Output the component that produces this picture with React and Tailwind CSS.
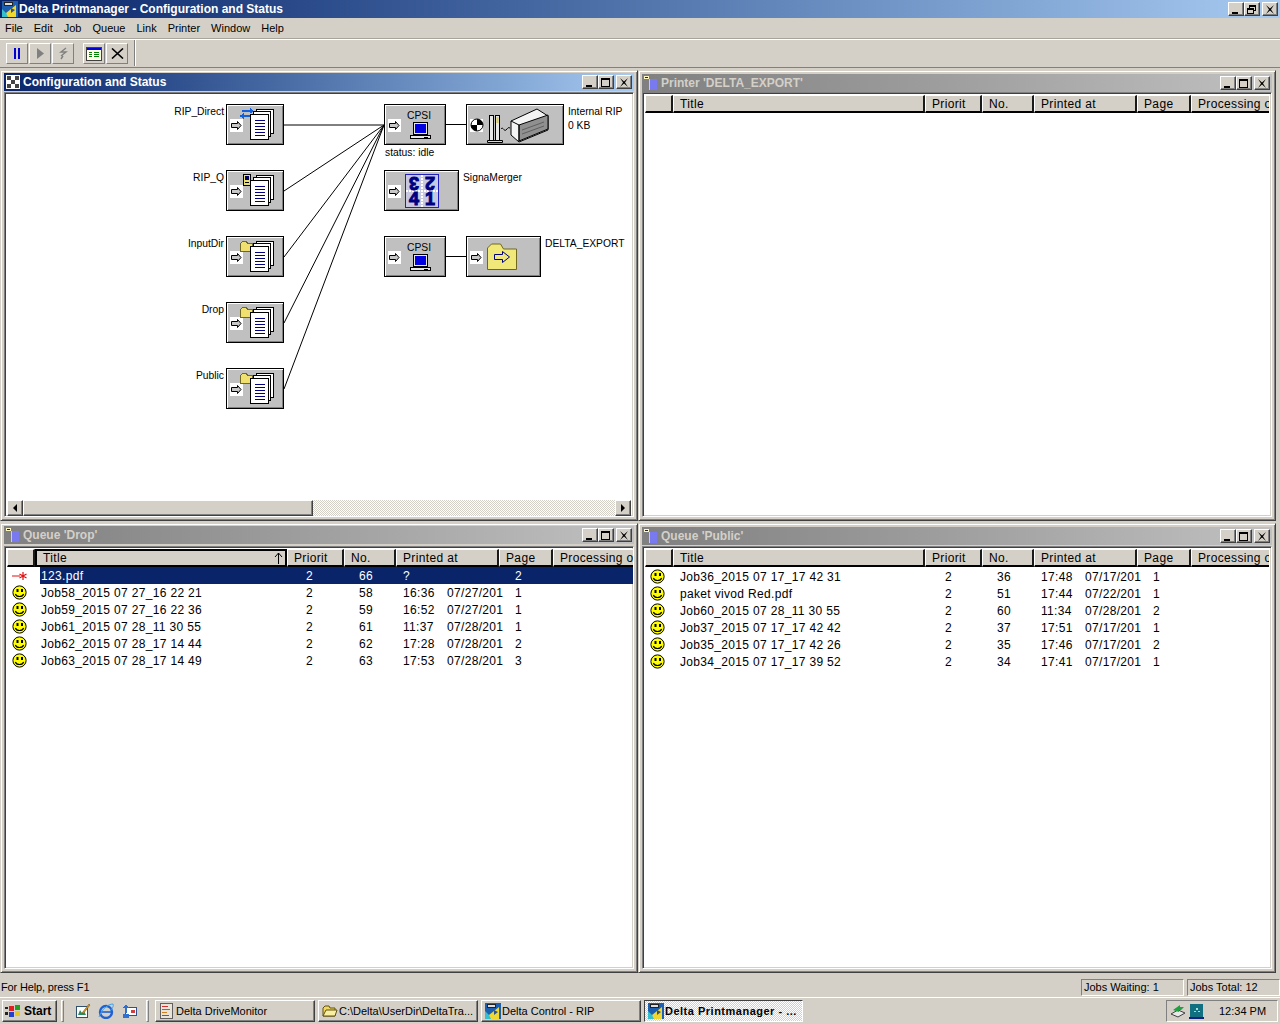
const RAISED = "border border-t-white border-l-white border-r-[#404040] border-b-[#404040] shadow-[inset_-1px_-1px_0_#808080]"
const SUNKEN = "border border-t-[#808080] border-l-[#808080] border-r-white border-b-white shadow-[inset_1px_1px_0_#404040,inset_-1px_-1px_0_#d4d0c8]"

const DROP_JOBS = [
    { title: "Job58_2015 07 27_16 22 21", prio: "2", no: "58", time: "16:36", date: "07/27/201", page: "1" },
    { title: "Job59_2015 07 27_16 22 36", prio: "2", no: "59", time: "16:52", date: "07/27/201", page: "1" },
    { title: "Job61_2015 07 28_11 30 55", prio: "2", no: "61", time: "11:37", date: "07/28/201", page: "1" },
    { title: "Job62_2015 07 28_17 14 44", prio: "2", no: "62", time: "17:28", date: "07/28/201", page: "2" },
    { title: "Job63_2015 07 28_17 14 49", prio: "2", no: "63", time: "17:53", date: "07/28/201", page: "3" },
]

const PUBLIC_JOBS = [
    { title: "Job36_2015 07 17_17 42 31", prio: "2", no: "36", time: "17:48", date: "07/17/201", page: "1" },
    { title: "paket vivod Red.pdf", prio: "2", no: "51", time: "17:44", date: "07/22/201", page: "1" },
    { title: "Job60_2015 07 28_11 30 55", prio: "2", no: "60", time: "11:34", date: "07/28/201", page: "2" },
    { title: "Job37_2015 07 17_17 42 42", prio: "2", no: "37", time: "17:51", date: "07/17/201", page: "1" },
    { title: "Job35_2015 07 17_17 42 26", prio: "2", no: "35", time: "17:46", date: "07/17/201", page: "2" },
    { title: "Job34_2015 07 17_17 39 52", prio: "2", no: "34", time: "17:41", date: "07/17/201", page: "1" },
]

const MENU = ["File", "Edit", "Job", "Queue", "Link", "Printer", "Window", "Help"]

function WinButton({ kind, className = "" }) {
    return (
        <div className={`flex h-[14px] w-[16px] items-center justify-center bg-[#d4d0c8] ${RAISED} ${className}`}>
            <svg width="10" height="9" viewBox="0 0 10 9" shapeRendering="crispEdges">
                {kind === "min" && <path d="M1 7h6v2H1z" fill="#000" />}
                {kind === "max" && <path d="M0.5 0.5h8v8h-8zM0.5 1.5h8" fill="none" stroke="#000" />}
                {kind === "restore" && <path d="M2.5 2.5v-2h6v5h-2M0.5 3.5h6v5h-6zM0.5 4.5h6M2.5 1.5h6" fill="none" stroke="#000" />}
                {kind === "close" && <path d="M1 0l4 3.5L9 0l-3 4.5L9 9 5 5.5 1 9l3-4.5z" fill="#000" shapeRendering="auto" />}
            </svg>
        </div>
    )
}

function AppIcon({ size = 16 }) {
    return (
        <svg width={size} height={size} viewBox="0 0 16 16" className="shrink-0">
            <rect width="16" height="16" fill="#1c5fb0" />
            <path d="M0 8L8 16H0z" fill="#35c0d0" />
            <path d="M4 12L14 4v12H6z" fill="#f0d830" />
            <path d="M2 1h9v4H2z" fill="#222" />
            <path d="M3 2h7v2H3z" fill="#ddd" />
            <path d="M9 7l4 2-4 3z" fill="#30508a" />
        </svg>
    )
}

function ConfigIcon() {
    return (
        <svg width="14" height="14" viewBox="0 0 14 14" className="shrink-0" shapeRendering="crispEdges">
            <rect width="14" height="14" fill="#fff" />
            <path d="M1 1h4v4H1zM9 1h4v4H9zM5 5h4v4H5zM1 9h4v4H1zM9 9h4v4H9z" fill="#444" />
        </svg>
    )
}

function QueueIcon() {
    return (
        <svg width="14" height="14" viewBox="0 0 14 14" className="shrink-0" shapeRendering="crispEdges">
            <rect x="5" y="3" width="8" height="11" fill="#7a7af0" />
            <rect x="5" y="3" width="1" height="11" fill="#c8c8ff" />
            <rect x="0" y="0" width="5" height="3" fill="#fff8c0" />
            <rect x="1" y="1" width="3" height="1" fill="#222" />
        </svg>
    )
}

function MdiWindow({ title, icon, active, titleClass = "", bodyClass = "mt-[1px]", children }) {
    return (
        <div className="flex min-h-0 flex-col border border-t-[#d4d0c8] border-l-[#d4d0c8] border-r-[#404040] border-b-[#404040] bg-[#d4d0c8] p-[3px] shadow-[inset_1px_1px_0_#fff,inset_-1px_-1px_0_#808080]">
            <div className={`flex h-[18px] shrink-0 items-center pl-[2px] pr-[2px] ${active ? "bg-gradient-to-r from-[#0a246a] to-[#a6caf0]" : "bg-gradient-to-r from-[#808080] to-[#c0c0c0]"} ${titleClass}`}>
                {icon}
                <span className={`ml-[3px] text-[12px] font-bold ${active ? "text-white" : "text-[#d4d0c8]"}`}>{title}</span>
                <div className="ml-auto flex items-center">
                    <WinButton kind="min" />
                    <WinButton kind="max" />
                    <WinButton kind="close" className="ml-[2px]" />
                </div>
            </div>
            <div className={`flex min-h-0 flex-1 flex-col overflow-hidden bg-white ${SUNKEN} p-[2px] ${bodyClass}`}>
                {children}
            </div>
        </div>
    )
}

function HeaderCell({ label, className, pressed, sort }) {
    return (
        <div className={`relative flex h-[18px] shrink-0 items-center overflow-hidden whitespace-nowrap bg-[#d4d0c8] pl-[6px] text-[12px] tracking-[0.35px] ${pressed ? "border-2 border-black" : "border-t border-l border-r-2 border-b-2 border-t-white border-l-white border-r-[#1a1a1a] border-b-black"} ${className}`}>
            {label}
            {sort && (
                <svg width="9" height="13" viewBox="0 0 9 13" className="absolute right-[2px] top-[1px]">
                    <path d="M4.5 12V1M1 5l3.5-4L8 5" fill="none" stroke="#000" />
                </svg>
            )}
        </div>
    )
}

function ListHeader({ pressedTitle }) {
    return (
        <div className="flex h-[18px] shrink-0 overflow-hidden bg-[#d4d0c8]">
            <HeaderCell label="" className="w-[28px]" />
            <HeaderCell label="Title" className="w-[252px]" pressed={pressedTitle} sort={pressedTitle} />
            <HeaderCell label="Priorit" className="w-[57px]" />
            <HeaderCell label="No." className="w-[52px]" />
            <HeaderCell label="Printed at" className="w-[103px]" />
            <HeaderCell label="Page" className="w-[54px]" />
            <HeaderCell label="Processing of" className="w-[90px]" />
        </div>
    )
}

function Smiley() {
    return (
        <svg width="15" height="15" viewBox="0 0 15 15">
            <circle cx="7.5" cy="7.5" r="6.6" fill="#ffff00" stroke="#000" strokeWidth="1" />
            <rect x="4.5" y="4" width="2" height="3" fill="#000" />
            <rect x="9" y="4" width="2" height="3" fill="#000" />
            <path d="M3.4 9c1 3.4 7.2 3.4 8.2 0" fill="none" stroke="#000" strokeWidth="1.1" />
        </svg>
    )
}

function RedMark() {
    return (
        <svg width="15" height="15" viewBox="0 0 15 15">
            <path d="M0 8h8" stroke="#e01010" strokeWidth="1" />
            <path d="M11 4v8M7.5 6l7 4M7.5 10l7-4" stroke="#e01010" strokeWidth="1.2" />
        </svg>
    )
}

function JobRow({ job, icon, selected, iconClass, prioClass }) {
    return (
        <div className="flex h-[17px] shrink-0 items-center whitespace-nowrap text-[12px] tracking-[0.33px]">
            <div className={`flex shrink-0 pl-[5px] ${iconClass}`}>{icon}</div>
            <div className={`flex h-[17px] flex-1 items-center ${selected ? "bg-[#0a246a] text-white" : ""}`}>
                <span className="w-[266px] shrink-0 pl-[1px]">{job.title}</span>
                <span className={`shrink-0 ${prioClass}`}>{job.prio}</span>
                <span className="w-[44px] shrink-0">{job.no}</span>
                <span className="w-[44px] shrink-0">{job.time}</span>
                <span className="w-[68px] shrink-0">{job.date}</span>
                <span>{job.page}</span>
            </div>
        </div>
    )
}

function ArrowBox() {
    return (
        <div className="absolute left-[3px] top-[14px] flex h-[13px] w-[13px] items-center justify-center bg-white">
            <svg width="11" height="9" viewBox="0 0 11 9">
                <path d="M0.5 2.5h6v-2l3.5 4-3.5 4v-2h-6z" fill="#c8c8c8" stroke="#000" strokeWidth="1" />
            </svg>
        </div>
    )
}

function DocStack() {
    return (
        <svg width="25" height="31" viewBox="0 0 25 31" className="absolute left-[23px] top-[4px]" shapeRendering="crispEdges">
            <rect x="6.5" y="0.5" width="17" height="24" fill="#fff" stroke="#000" />
            <rect x="3.5" y="2.5" width="17" height="25" fill="#fff" stroke="#000" />
            <rect x="0.5" y="5.5" width="18" height="25" fill="#fff" stroke="#000" />
            <path d="M5 11h10M5 14h10M5 17h10M5 20h10M5 23h10M5 26h10" stroke="#000080" />
        </svg>
    )
}

function SmallBadge({ kind }) {
    return (
        <svg width="14" height="13" viewBox="0 0 14 13" className="absolute left-[13px] top-[3px]" shapeRendering="crispEdges">
            {kind === "direct" && (
                <path d="M2 3h10M10 1l3 2-3 2M12 8H2M4 6L1 8l3 2" fill="none" stroke="#1060e0" strokeWidth="1.4" />
            )}
            {kind === "q" && (
                <>
                    <rect x="3.5" y="0.5" width="7" height="11" fill="#e8e070" stroke="#000" />
                    <rect x="5" y="2" width="4" height="4" fill="#000060" />
                    <rect x="5" y="8" width="4" height="1" fill="#000" />
                </>
            )}
            {kind === "folder" && (
                <path d="M0.5 3.5l2-2h4l1 2h5v8h-12z" fill="#f0e070" stroke="#706820" />
            )}
        </svg>
    )
}

function Node({ className, children }) {
    return (
        <div className={`absolute h-[41px] bg-[#c0c0c0] border border-black shadow-[inset_1px_1px_0_#fff,inset_-1px_-1px_0_#808080] ${className}`}>
            <ArrowBox />
            {children}
        </div>
    )
}

function Computer() {
    return (
        <svg width="23" height="18" viewBox="0 0 23 18" className="absolute left-[24px] top-[17px]" shapeRendering="crispEdges">
            <rect x="4.5" y="0.5" width="14" height="12" fill="#e8e8e8" stroke="#000" />
            <rect x="6" y="2" width="11" height="9" fill="#0000e0" />
            <rect x="1.5" y="13.5" width="20" height="3" fill="#e8e8e8" stroke="#000" />
            <path d="M15 15h4" stroke="#000" />
        </svg>
    )
}

function Label({ className, children }) {
    return <span className={`absolute mt-[1px] whitespace-nowrap text-[10.3px] leading-[12px] text-black ${className}`}>{children}</span>
}

function Diagram() {
    return (
        <div className="relative flex-1 overflow-hidden bg-white">
            {/* node canvas */}
            <div className="absolute -left-px -top-[3px] h-full w-full">
                <svg className="absolute left-0 top-0" width="628" height="400">
                    <path d="M278 33H378M278 99L378 33M278 165L378 33M278 231L378 33M278 297L378 33" stroke="#000" fill="none" />
                    <path d="M440 32.5H460M440 164.5H460" stroke="#000" fill="none" />
                </svg>

                <Label className="right-[406px] top-[13px]">RIP_Direct</Label>
                <Label className="right-[406px] top-[79px]">RIP_Q</Label>
                <Label className="right-[406px] top-[145px]">InputDir</Label>
                <Label className="right-[406px] top-[211px]">Drop</Label>
                <Label className="right-[406px] top-[277px]">Public</Label>

                <Node className="left-[220px] top-[12px] w-[58px]"><SmallBadge kind="direct" /><DocStack /></Node>
                <Node className="left-[220px] top-[78px] w-[58px]"><SmallBadge kind="q" /><DocStack /></Node>
                <Node className="left-[220px] top-[144px] w-[58px]"><SmallBadge kind="folder" /><DocStack /></Node>
                <Node className="left-[220px] top-[210px] w-[58px]"><SmallBadge kind="folder" /><DocStack /></Node>
                <Node className="left-[220px] top-[276px] w-[58px]"><SmallBadge kind="folder" /><DocStack /></Node>

                <Node className="left-[378px] top-[12px] w-[62px]">
                    <span className="absolute left-[22px] top-[5px] text-[10.3px] leading-[12px]">CPSI</span>
                    <Computer />
                </Node>
                <Label className="left-[379px] top-[54px]">status: idle</Label>

                <Node className="left-[460px] top-[12px] w-[98px]">
                    <svg width="92" height="36" viewBox="0 0 92 36" className="absolute left-[3px] top-[2px]">
                        <circle cx="7" cy="18" r="6" fill="#fff" stroke="#000" />
                        <path d="M7 12a6 6 0 0 1 6 6H7zM7 18v6a6 6 0 0 1-6-6z" fill="#000" />
                        <rect x="19.5" y="8.5" width="4" height="25" fill="#e8e8e8" stroke="#000" />
                        <rect x="25.5" y="8.5" width="4" height="25" fill="#e8e8e8" stroke="#000" />
                        <rect x="26.5" y="10" width="2" height="6" fill="#e0d040" />
                        <path d="M17.5 33.5h15v2h-15z" fill="#d8d8d8" stroke="#000" />
                        <path d="M31 22c2-3 3 3 5 1s2-3 4-2" fill="none" stroke="#000" />
                        <path d="M41 14L67 2l11 7v14L49 35l-8-7z" fill="#f4f4f4" stroke="#000" />
                        <path d="M49 18l29-10v14L49 34z" fill="#909090" stroke="#000" />
                        <path d="M41 14l8 4v16" fill="none" stroke="#000" />
                        <path d="M52 23l22-8M52 27l22-8" stroke="#606060" />
                    </svg>
                </Node>
                <Label className="left-[562px] top-[13px]">Internal RIP</Label>
                <Label className="left-[562px] top-[27px]">0 KB</Label>

                <Node className="left-[378px] top-[78px] w-[75px]">
                    <svg width="34" height="34" viewBox="0 0 34 34" className="absolute left-[20px] top-[3px]">
                        <rect x="0.5" y="0.5" width="33" height="33" fill="#c8c8e0" stroke="#2020c0" />
                        <path d="M17 1v32M1 17h32" stroke="#fff" strokeWidth="2" strokeDasharray="2 1" />
                        <g fill="#000080" fontFamily="Liberation Sans, sans-serif" fontWeight="900" fontSize="18" textAnchor="middle">
                            <text x="9" y="31" stroke="#000080">4</text>
                            <text x="25" y="31" stroke="#000080">1</text>
                            <text transform="rotate(180 9 9)" x="9" y="15" stroke="#000080">3</text>
                            <text transform="rotate(180 25 9)" x="25" y="15" stroke="#000080">2</text>
                        </g>
                    </svg>
                </Node>
                <Label className="left-[457px] top-[79px]">SignaMerger</Label>

                <Node className="left-[378px] top-[144px] w-[62px]">
                    <span className="absolute left-[22px] top-[5px] text-[10.3px] leading-[12px]">CPSI</span>
                    <Computer />
                </Node>

                <Node className="left-[460px] top-[144px] w-[75px]">
                    <svg width="30" height="27" viewBox="0 0 30 27" className="absolute left-[20px] top-[6px]">
                        <path d="M0.5 26.5V5l4-4h9l3 5h13v20.5z" fill="#f0e878" stroke="#706820" />
                        <path d="M7.5 11.5h8v-3l7 5.5-7 5.5v-3h-8z" fill="#f0e878" stroke="#000080" />
                    </svg>
                </Node>
                <Label className="left-[539px] top-[145px]">DELTA_EXPORT</Label>
            </div>
        </div>
    )
}

function ScrollArrow({ dir }) {
    return (
        <div className={`flex h-[16px] w-[16px] shrink-0 items-center justify-center bg-[#d4d0c8] ${RAISED}`}>
            <svg width="6" height="8" viewBox="0 0 6 8">
                <path d={dir === "left" ? "M5 0v8L1 4z" : "M1 0v8l4-4z"} fill="#000" />
            </svg>
        </div>
    )
}

function HScrollBar() {
    return (
        <div className="flex h-[16px] shrink-0 bg-[repeating-conic-gradient(#d4d0c8_0_25%,#fff_0_50%)] bg-[length:2px_2px]">
            <ScrollArrow dir="left" />
            <div className={`w-[290px] bg-[#d4d0c8] ${RAISED}`} />
            <div className="flex-1" />
            <ScrollArrow dir="right" />
        </div>
    )
}

function ToolButton({ children }) {
    return (
        <div className="flex h-[21px] w-[22px] items-center justify-center border border-t-white border-l-white border-r-[#808080] border-b-[#808080]">
            {children}
        </div>
    )
}

function TaskButton({ icon, label, active, className }) {
    return (
        <div className={`flex h-[22px] items-center overflow-hidden whitespace-nowrap pl-[3px] text-[11px] ${active ? `border border-t-[#404040] border-l-[#404040] border-r-white border-b-white bg-[repeating-conic-gradient(#d4d0c8_0_25%,#fff_0_50%)] bg-[length:2px_2px] font-bold tracking-[0.5px]` : `bg-[#d4d0c8] ${RAISED}`} ${className}`}>
            {icon}
            <span className="ml-[1px]">{label}</span>
        </div>
    )
}

function Divider({ className = "" }) {
    return <div className={`h-[22px] w-[3px] border border-t-white border-l-white border-r-[#808080] border-b-[#808080] ${className}`} />
}

export default function App() {
    return (
        <div className="flex h-[1024px] w-[1280px] flex-col overflow-hidden bg-[#d4d0c8] text-black [font-family:'Liberation_Sans',Arial,sans-serif]">
            {/* main title bar */}
            <div className="flex h-[18px] shrink-0 items-center bg-gradient-to-r from-[#0a246a] to-[#a6caf0] pl-[2px] pr-[2px]">
                <AppIcon />
                <span className="ml-[1px] text-[12px] font-bold text-white">Delta Printmanager - Configuration and Status</span>
                <div className="ml-auto flex items-center">
                    <WinButton kind="min" />
                    <WinButton kind="restore" />
                    <WinButton kind="close" className="ml-[2px]" />
                </div>
            </div>

            {/* menu */}
            <div className="flex h-[20px] shrink-0 items-center gap-[11px] pl-[5px] text-[11px]">
                {MENU.map(item => <span key={item}>{item}</span>)}
            </div>

            {/* toolbar */}
            <div className="flex h-[30px] shrink-0 items-center border-t border-t-[#a8a49c] border-b border-b-[#808080] pl-[6px] shadow-[inset_0_1px_0_#fff]">
                <div className="flex gap-[1px]">
                    <ToolButton>
                        <svg width="8" height="11" shapeRendering="crispEdges"><path d="M1 0h2v11H1zM5 0h2v11H5z" fill="#0000d0" /></svg>
                    </ToolButton>
                    <ToolButton>
                        <svg width="8" height="11"><path d="M1 0l7 5.5L1 11z" fill="#808080" /></svg>
                    </ToolButton>
                    <ToolButton>
                        <svg width="9" height="13" fill="none" stroke="#808080" strokeWidth="1.4"><path d="M7 1L2 5h5L2 9M2 12l2-3" /></svg>
                    </ToolButton>
                </div>
                <div className="flex gap-[1px] pl-[9px]">
                    <ToolButton>
                        <svg width="17" height="15" shapeRendering="crispEdges">
                            <rect x="0.5" y="1.5" width="15" height="13" fill="#ffffe8" stroke="#404040" />
                            <rect x="1" y="2" width="14" height="2" fill="#0000e0" />
                            <path d="M3 6h3v1H3zM8 6h5v1H8zM3 8h3v1H3zM8 8h5v1H8zM3 10h3v1H3zM8 10h5v1H8z" fill="#008000" />
                        </svg>
                    </ToolButton>
                    <ToolButton>
                        <svg width="13" height="11"><path d="M1 0.5L12 10.5M12 0.5L1 10.5" stroke="#000" strokeWidth="1.6" /></svg>
                    </ToolButton>
                </div>
                <div className="ml-[6px] h-[26px] w-[2px] border-l border-l-[#808080] border-r border-r-white" />
            </div>

            {/* mdi area */}
            <div className="grid min-h-0 flex-1 grid-cols-[638px_638px] grid-rows-[451px_450px] gap-y-[2px] pt-[2px]">
                <MdiWindow title="Configuration and Status" icon={<ConfigIcon />} active titleClass="-mt-[1px]" bodyClass="mt-[1px] pb-0">
                    <Diagram />
                    <HScrollBar />
                </MdiWindow>
                <MdiWindow title="Printer 'DELTA_EXPORT'" icon={<QueueIcon />} bodyClass="mt-0">
                    <ListHeader />
                    <div className="flex-1 bg-white" />
                </MdiWindow>
                <MdiWindow title="Queue 'Drop'" icon={<QueueIcon />} titleClass="-mt-[1px]" bodyClass="mt-[2px] pr-0">
                    <ListHeader pressedTitle />
                    <JobRow
                        job={{ title: "123.pdf", prio: "2", no: "66", time: "?", date: "", page: "2" }}
                        icon={<RedMark />}
                        selected
                        iconClass="w-[33px]"
                        prioClass="w-[53px]"
                    />
                    {DROP_JOBS.map(job => (
                        <JobRow key={job.no} job={job} icon={<Smiley />} iconClass="w-[33px]" prioClass="w-[53px]" />
                    ))}
                </MdiWindow>
                <MdiWindow title="Queue 'Public'" icon={<QueueIcon />}>
                    <ListHeader />
                    <div className="h-[1px] shrink-0" />
                    {PUBLIC_JOBS.map(job => (
                        <JobRow key={job.no} job={job} icon={<Smiley />} iconClass="w-[34px]" prioClass="w-[52px]" />
                    ))}
                </MdiWindow>
            </div>

            {/* status bar */}
            <div className="flex h-[20px] shrink-0 items-center text-[11px]">
                <span className="pl-[1px] tracking-[-0.15px]">For Help, press F1</span>
                <div className="ml-auto flex h-[17px] items-center gap-[3px]">
                    <div className="flex h-[17px] w-[103px] items-center border border-t-[#808080] border-l-[#808080] border-r-white border-b-white pl-[2px]">Jobs Waiting: 1</div>
                    <div className="flex h-[17px] w-[93px] items-center border border-t-[#808080] border-l-[#808080] border-r-white border-b-white pl-[2px]">Jobs Total: 12</div>
                </div>
            </div>

            {/* taskbar */}
            <div className="flex h-[27px] shrink-0 items-center border-t border-t-white pl-[2px] text-[11px] shadow-[inset_0_1px_0_#d4d0c8]">
                <div className={`flex h-[22px] w-[55px] items-center bg-[#d4d0c8] pl-[2px] text-[12px] font-bold ${RAISED}`}>
                    <svg width="18" height="16" viewBox="0 0 20 16" shapeRendering="crispEdges">
                        <path d="M0 3h3v3H0zM0 9h3v3H0z" fill="#222" />
                        <path d="M4 2h6v6H4z" fill="#e02020" />
                        <path d="M11 1h6v6h-6z" fill="#20a020" />
                        <path d="M4 9h6v6H4z" fill="#2040d0" />
                        <path d="M11 8h6v6h-6z" fill="#e8c820" />
                    </svg>
                    <span className="ml-[1px]">Start</span>
                </div>
                <Divider className="ml-[4px]" />
                <div className="ml-[11px] flex w-[70px] items-center gap-[7px]">
                    <svg width="16" height="16" viewBox="0 0 16 16">
                        <rect x="1.5" y="3.5" width="11" height="11" fill="#fff" stroke="#305070" />
                        <path d="M3 12l2-5 2 3 2-2 2 4z" fill="#2a8a60" />
                        <path d="M7 10l7-9 1 1-7 9z" fill="#e0a020" stroke="#604010" strokeWidth="0.5" />
                    </svg>
                    <svg width="16" height="16" viewBox="0 0 16 16">
                        <ellipse cx="8" cy="9" rx="6" ry="6" fill="none" stroke="#2060d0" strokeWidth="2.4" />
                        <path d="M3 9h11" stroke="#2060d0" strokeWidth="1.6" />
                        <path d="M1 14C4 6 10 1 15 1c1 2-1 5-3 7" fill="none" stroke="#40a0f0" strokeWidth="1" />
                    </svg>
                    <svg width="16" height="16" viewBox="0 0 16 16" shapeRendering="crispEdges">
                        <rect x="4.5" y="4.5" width="11" height="8" fill="#fff" stroke="#305090" />
                        <path d="M10 7h4v3h-4z" fill="#d04040" />
                        <path d="M2 5l3-4 3 4H6v5H4V5zM2 11h6v4H2z" fill="#3070d0" />
                    </svg>
                </div>
                <Divider className="ml-[1px]" />
                <div className="ml-[6px] flex gap-[3px]">
                    <TaskButton
                        className="w-[160px]"
                        label="Delta DriveMonitor"
                        icon={
                            <svg width="16" height="16" viewBox="0 0 16 16" shapeRendering="crispEdges">
                                <rect x="1.5" y="0.5" width="12" height="15" fill="#e8e4d8" stroke="#606060" />
                                <path d="M3 3h6v1H3z" fill="#d03030" />
                                <path d="M3 6h8v1H3z" fill="#30a030" />
                                <path d="M3 9h5v1H3z" fill="#d08020" />
                                <path d="M3 12h7v1H3z" fill="#d03030" />
                            </svg>
                        }
                    />
                    <TaskButton
                        className="w-[160px]"
                        label="C:\Delta\UserDir\DeltaTra..."
                        icon={
                            <svg width="16" height="16" viewBox="0 0 16 16" className="shrink-0">
                                <path d="M1 13V5l2-2h4l1 2h5v8z" fill="#f0d860" stroke="#605010" />
                                <path d="M1 13l3-6h11l-2 6z" fill="#f8f0a0" stroke="#605010" />
                            </svg>
                        }
                    />
                    <TaskButton className="w-[160px]" label="Delta Control - RIP" icon={<AppIcon />} />
                    <TaskButton className="w-[159px]" label="Delta Printmanager - ..." active icon={<AppIcon />} />
                </div>
                <div className="ml-auto mr-[2px] flex h-[22px] w-[112px] items-center border border-t-[#808080] border-l-[#808080] border-r-white border-b-white pl-[3px]">
                    <svg width="16" height="16" viewBox="0 0 16 16">
                        <path d="M1 11l7-4 7 3-7 4z" fill="#e8e8e8" stroke="#404040" />
                        <path d="M3 7l7-5v2h4l-3 3H9v2z" fill="#20a040" />
                    </svg>
                    <svg width="16" height="16" viewBox="0 0 16 16" className="ml-[2px]" shapeRendering="crispEdges">
                        <rect x="2" y="1" width="13" height="13" fill="#107080" />
                        <rect x="1" y="14" width="15" height="2" fill="#102080" />
                        <path d="M8 5h2v2H8zM6 8h2v1H6zM10 8h2v1h-2z" fill="#a0e0e0" />
                    </svg>
                    <span className="ml-[15px]">12:34 PM</span>
                </div>
            </div>
        </div>
    )
}
